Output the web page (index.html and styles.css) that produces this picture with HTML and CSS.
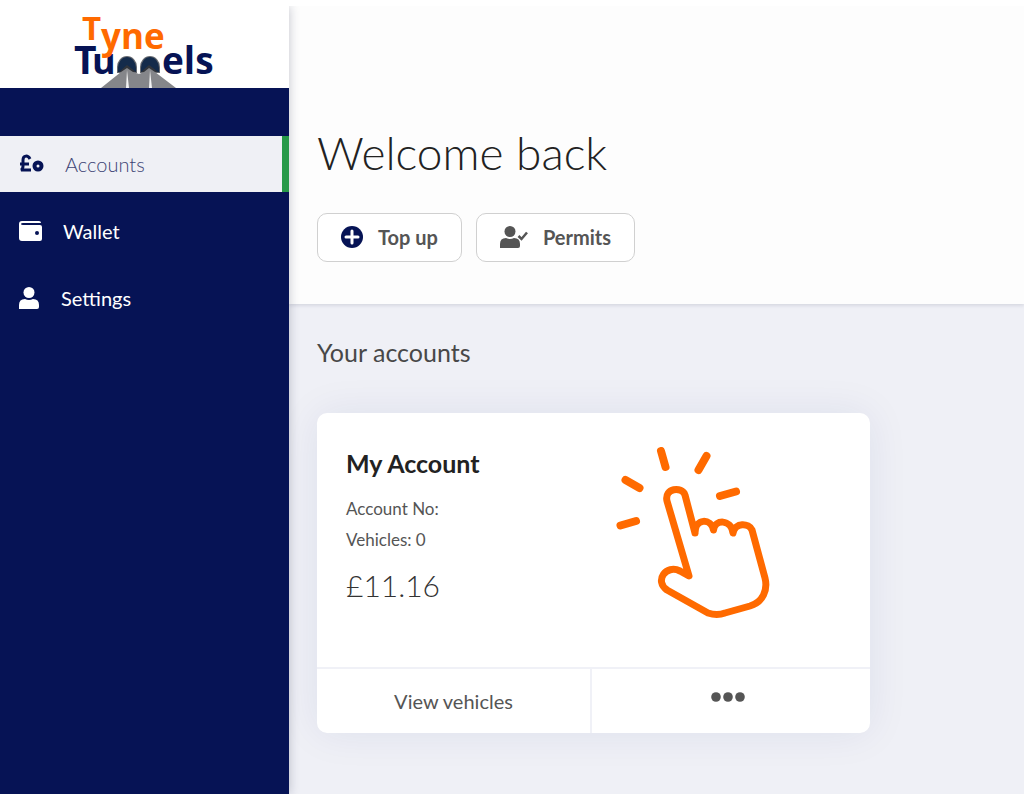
FILE: index.html
```
<!DOCTYPE html>
<html lang="en">
  <head>
    <meta charset="UTF-8" />
    <meta name="viewport" content="width=device-width, initial-scale=1.0" />
    <title>Tyne Tunnels - Accounts</title>
    <link rel="stylesheet" href="styles.css">
  </head>
  <body>
    <div class="page">
      <aside class="sidebar">
        <a class="logo" href="#">
          <svg width="140" height="82" viewBox="0 -6 140 82" role="img" aria-label="Tyne Tunnels">
            <g class="logo-navy">
              <text x="-1" y="62" font-size="39">T</text>
              <text x="17" y="62" font-size="36">u</text>
              <text x="87" y="62" font-size="37">els</text>
            </g>
            <g class="logo-orange">
              <text x="7" y="28" font-size="33">T</text>
              <text x="26" y="37" font-size="35">yne</text>
            </g>
            <path d="M42 61V55a10 11 0 0 1 20 0V61zM65 61V55a10 11 0 0 1 20 0V61z" fill="#66696f" />
            <path d="M43 60V56a9 11 0 0 1 18 0V60zM66 60V56a9 11 0 0 1 18 0V60z" fill="#142b4b" />
            <path d="M44 60L52 53L61 60zM66 60L74 53L83 60z" fill="#30343b" />
            <path d="M26 76L46 60L52 56L58 60L64 62L69 60L74 56L80 60L101 76z" fill="#85868a" />
            <path d="M52 58L51 76H54zM75 58L74 76H77z" fill="#f4f4f4" />
          </svg>
        </a>
        <nav class="menu">
          <a class="menu-item active" href="#">
            <svg width="26" height="20" viewBox="0 0 26 20" fill="none" stroke="#061355" stroke-width="3">
              <path d="M11 5C9 1 4 1 4 6V12Q4 15 2 16H12M1 10H10" />
              <circle cx="19" cy="12" r="3.500" stroke-width="4" />
            </svg>
            Accounts
          </a>
          <a class="menu-item" href="#">
            <svg width="24" height="20" viewBox="0 0 24 20">
              <path d="M3 0H20Q22 0 22 2H4Q2 2 2 3T4 4H21Q23 4 23 6V18Q23 20 21 20H3Q0 20 0 17V3Q0 0 3 0z" fill="#fff" />
              <circle cx="18" cy="12" r="2" fill="#061355" />
            </svg>
            Wallet
          </a>
          <a class="menu-item" href="#">
            <svg width="22" height="22" viewBox="0 0 22 22" fill="#fff">
              <circle cx="10" cy="5.500" r="5.500" />
              <path d="M0 22V18Q0 12 6 12Q10 14 14 12Q20 12 20 18V20Q20 22 18 22z" />
            </svg>
            Settings
          </a>
        </nav>
      </aside>
      <main class="main">
        <header class="welcome">
          <h1>Welcome back</h1>
          <div class="actions">
            <button type="button">
              <svg width="22" height="22" viewBox="0 0 22 22">
                <circle cx="11" cy="11" r="11" fill="#061355" />
                <path d="M11 5V17M5 11H17" stroke="#fff" stroke-width="3" stroke-linecap="round" />
              </svg>
              Top up
            </button>
            <button type="button">
              <svg width="28" height="22" viewBox="0 0 28 22" fill="#555">
                <circle cx="10" cy="5.500" r="5.500" />
                <path d="M0 22V18Q0 12 6 12Q10 14 14 12Q20 12 20 18V20Q20 22 18 22z" />
                <path d="M18.500 10L21.500 13L27 6.500" fill="none" stroke="#555" stroke-width="2.500" />
              </svg>
              Permits
            </button>
          </div>
        </header>
        <section class="accounts">
          <h2>Your accounts</h2>
          <article class="card">
            <div class="card-body">
              <div class="card-info">
                <h3>My Account</h3>
                <p>Account No:</p>
                <p>Vehicles: 0</p>
                <p class="balance">£11.16</p>
              </div>
              <svg class="hand" width="156" height="172" viewBox="615 447 156 172" fill="none" stroke="#ff6a00" stroke-width="7" stroke-linecap="round" stroke-linejoin="round">
                <path d="M661 451L665.500 467M706.500 456L698.500 470M625.500 480L639.500 488M736 491.500L720 496M636 521L620.500 525.500" stroke-width="8" />
                <path d="M695 533L685 495C682 486 664 488 667 501L689 576L680 571C666 564 654 581 667 590L708 613Q717 616 725 613L750 606C763 602 768 590 765 578L752 530C749 523 735 522 733 533C731 519 715 519 713.500 530C711 518 695 518 695 533" />
              </svg>
            </div>
            <footer class="card-footer">
              <a href="#">View vehicles</a>
              <button type="button" aria-label="More options">
                <svg width="34" height="10" viewBox="0 0 34 10" fill="#555">
                  <circle cx="5" cy="5" r="4.800" />
                  <circle cx="17" cy="5" r="4.800" />
                  <circle cx="29" cy="5" r="4.800" />
                </svg>
              </button>
            </footer>
          </article>
        </section>
      </main>
    </div>
  </body>
</html>
```
FILE: styles.css
```
* {
  box-sizing: border-box;
}
body {
  margin: 0;
  padding: 6px 0 1px;
  background-color: #fff;
  color: #555;
  font-family: Lato, "Open Sans", sans-serif;
}
h1,
h2,
h3,
p {
  margin: 0;
}
a {
  color: inherit;
  text-decoration: none;
}
svg {
  flex-shrink: 0;
}
.page {
  display: flex;
  min-height: calc(100vh - 7px);
  overflow: hidden;
}

/* Sidebar */
.sidebar {
  position: relative;
  flex: 0 0 289px;
  background-color: #061355;
  box-shadow: 0 0 10px rgba(20, 25, 60, 0.25);
}
.logo {
  display: flex;
  justify-content: center;
  align-items: flex-end;
  height: 82px;
  background-color: #fff;
}
.logo svg {
  overflow: visible;
}
.logo text {
  font-family: "Open Sans", "Noto Sans", sans-serif;
  font-weight: 700;
}
.logo-navy {
  fill: #061355;
}
.logo-orange {
  fill: #ff6a00;
}
.menu {
  display: flex;
  flex-direction: column;
  gap: 11px;
  padding-top: 48px;
}
.menu-item {
  display: flex;
  align-items: center;
  gap: 20px;
  height: 56px;
  padding: 0 19px;
  color: #fff;
  font-size: 20px;
}
.menu-item.active {
  background-color: #eff0f5;
  border-right: 7px solid #289a49;
  color: #3c4374;
  font-weight: 300;
}

/* Main column */
.main {
  flex: 1;
  min-width: 0;
  background-color: #eff0f6;
}
.welcome {
  padding: 119px 28px 42px;
  background-color: #fdfdfd;
  box-shadow: 0 1px 4px rgba(20, 25, 60, 0.15);
}
.welcome h1 {
  color: #222;
  font-size: 46px;
  font-weight: 300;
  line-height: 56px;
}
.actions {
  display: flex;
  gap: 14px;
  margin-top: 32px;
}
.actions button {
  display: flex;
  align-items: center;
  gap: 15px;
  height: 49px;
  padding: 0 23px 2px;
  border: 1px solid #d0d0d0;
  border-radius: 10px;
  background-color: #fff;
  color: #555;
  font-family: inherit;
  font-size: 20px;
  font-weight: 700;
}
.accounts {
  padding: 32px 28px;
}
.accounts h2 {
  color: #484848;
  font-size: 25px;
  font-weight: 400;
  line-height: 32px;
}

/* Account card */
.card {
  max-width: 553px;
  margin-top: 45px;
  border-radius: 10px;
  background-color: #fff;
  box-shadow: 0 0 40px rgba(30, 40, 110, 0.08);
}
.card-body {
  display: flex;
  justify-content: space-between;
  padding: 34px 99px 48px 29px;
}
.card h3 {
  margin-bottom: 14px;
  color: #222;
  font-size: 25px;
  font-weight: 700;
  line-height: 32px;
}
.card p {
  font-size: 17px;
  line-height: 31px;
}
.card .balance {
  margin-top: 10px;
  color: #333;
  font-size: 30px;
  font-weight: 300;
  line-height: 40px;
}
.card-footer {
  display: grid;
  grid-template-columns: 39fr 40fr;
  height: 66px;
  border-top: 2px solid #f0f1f7;
}
.card-footer a,
.card-footer button {
  display: flex;
  justify-content: center;
  align-items: center;
  font-size: 20px;
}
.card-footer button {
  padding: 0 6px 8px 0;
  border: 0;
  border-left: 2px solid #f0f1f7;
  background: none;
}
```
